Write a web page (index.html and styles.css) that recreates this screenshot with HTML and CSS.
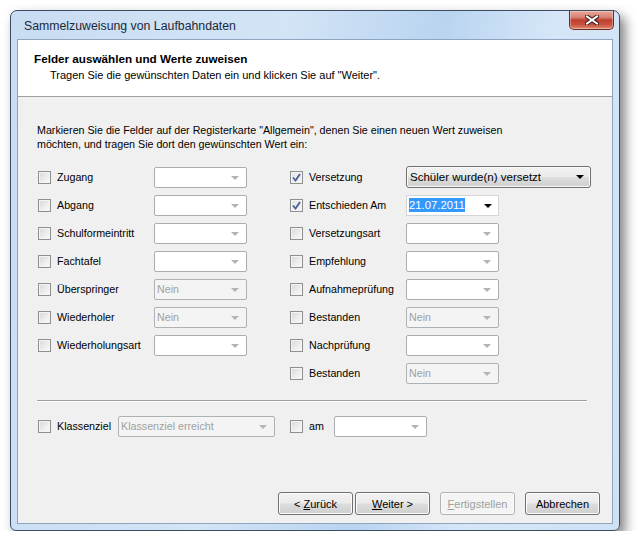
FILE: index.html
```html
<!DOCTYPE html>
<html lang="de">
<head>
    <meta charset="UTF-8">
    <title>Sammelzuweisung von Laufbahndaten</title>
    <link rel="stylesheet" href="styles.css">
</head>
<body>
    <div class="window">
        <div class="titlebar">
            <span class="title">Sammelzuweisung von Laufbahndaten</span>
            <span class="close-btn">
                <svg width="14" height="10" viewBox="0 0 14 10">
                    <path d="M2 1.5 L12 8.5 M12 1.5 L2 8.5" stroke="#3a1a16" stroke-width="4" stroke-linecap="square"/>
                    <path d="M2 1.5 L12 8.5 M12 1.5 L2 8.5" stroke="#fff" stroke-width="2" stroke-linecap="square"/>
                </svg>
            </span>
        </div>

        <div class="client">
            <div class="header">
                <div class="header-title">Felder auswählen und Werte zuweisen</div>
                <div class="header-sub">Tragen Sie die gewünschten Daten ein und klicken Sie auf "Weiter".</div>
            </div>

            <div class="content">
                <p class="intro">Markieren Sie die Felder auf der Registerkarte "Allgemein", denen Sie einen neuen Wert zuweisen<br>möchten, und tragen Sie dort den gewünschten Wert ein:</p>

                <div class="fields">
                    <div class="field-col">
                        <div class="row">
                            <label class="check"><span class="box"></span>Zugang</label>
                            <span class="combo"><span class="arrow"></span></span>
                        </div>
                        <div class="row">
                            <label class="check"><span class="box"></span>Abgang</label>
                            <span class="combo"><span class="arrow"></span></span>
                        </div>
                        <div class="row">
                            <label class="check"><span class="box"></span>Schulformeintritt</label>
                            <span class="combo"><span class="arrow"></span></span>
                        </div>
                        <div class="row">
                            <label class="check"><span class="box"></span>Fachtafel</label>
                            <span class="combo"><span class="arrow"></span></span>
                        </div>
                        <div class="row">
                            <label class="check"><span class="box"></span>Überspringer</label>
                            <span class="combo disabled"><span class="value">Nein</span><span class="arrow"></span></span>
                        </div>
                        <div class="row">
                            <label class="check"><span class="box"></span>Wiederholer</label>
                            <span class="combo disabled"><span class="value">Nein</span><span class="arrow"></span></span>
                        </div>
                        <div class="row">
                            <label class="check"><span class="box"></span>Wiederholungsart</label>
                            <span class="combo"><span class="arrow"></span></span>
                        </div>
                    </div>

                    <div class="field-col right">
                        <div class="row">
                            <label class="check"><span class="box checked"><svg width="9" height="9" viewBox="0 0 9 9"><path d="M1 4.5 L3.5 7.5 L8 1" fill="none" stroke="#4b5f9a" stroke-width="1.8"/></svg></span>Versetzung</label>
                            <span class="combo active"><span class="value">Schüler wurde(n) versetzt</span><span class="arrow dark"></span></span>
                        </div>
                        <div class="row">
                            <label class="check"><span class="box checked"><svg width="9" height="9" viewBox="0 0 9 9"><path d="M1 4.5 L3.5 7.5 L8 1" fill="none" stroke="#4b5f9a" stroke-width="1.8"/></svg></span>Entschieden Am</label>
                            <span class="combo date"><span class="value"><span class="selected">21.07.2011</span></span><span class="arrow dark"></span></span>
                        </div>
                        <div class="row">
                            <label class="check"><span class="box"></span>Versetzungsart</label>
                            <span class="combo"><span class="arrow"></span></span>
                        </div>
                        <div class="row">
                            <label class="check"><span class="box"></span>Empfehlung</label>
                            <span class="combo"><span class="arrow"></span></span>
                        </div>
                        <div class="row">
                            <label class="check"><span class="box"></span>Aufnahmeprüfung</label>
                            <span class="combo"><span class="arrow"></span></span>
                        </div>
                        <div class="row">
                            <label class="check"><span class="box"></span>Bestanden</label>
                            <span class="combo disabled"><span class="value">Nein</span><span class="arrow"></span></span>
                        </div>
                        <div class="row">
                            <label class="check"><span class="box"></span>Nachprüfung</label>
                            <span class="combo"><span class="arrow"></span></span>
                        </div>
                        <div class="row">
                            <label class="check"><span class="box"></span>Bestanden</label>
                            <span class="combo disabled"><span class="value">Nein</span><span class="arrow"></span></span>
                        </div>
                    </div>
                </div>

                <div class="divider"></div>

                <div class="row bottom-row">
                    <label class="check short"><span class="box"></span>Klassenziel</label>
                    <span class="combo disabled klassenziel"><span class="value">Klassenziel erreicht</span><span class="arrow"></span></span>
                    <label class="check am"><span class="box"></span>am</label>
                    <span class="combo"><span class="arrow"></span></span>
                </div>
            </div>

            <div class="footer">
                <button class="btn">&lt; <u>Z</u>urück</button>
                <button class="btn"><u>W</u>eiter &gt;</button>
                <button class="btn disabled"><u>F</u>ertigstellen</button>
                <button class="btn">Abbrechen</button>
            </div>
        </div>
    </div>
</body>
</html>
```

FILE: styles.css
```css
body {
    margin: 0;
    padding: 0;
    background-color: #ffffff;
    font-family: 'Liberation Sans', Arial, sans-serif;
    font-size: 10.7px;
    color: #000;
}

/* Window frame */
.window {
    position: relative;
    box-sizing: border-box;
    width: 610px;
    height: 521px;
    margin: 10px 0 0 10px;
    padding: 0 6px 6px 6px;
    display: flex;
    flex-direction: column;
    border: 1px solid #3a4d63;
    border-radius: 7px 7px 6px 6px;
    background: linear-gradient(100deg, #c8dcf2 0%, #d3e4f6 40%, #b9d4f0 62%, #d6e6f8 78%, #cfe1f5 100%);
    box-shadow: 5px 6px 12px rgba(0, 0, 0, 0.5);
}
.titlebar {
    height: 28px;
    display: flex;
    align-items: center;
    padding-left: 7px;
}
.title {
    font-size: 12.3px;
    color: #1a2a3a;
    padding-top: 1px;
}
.close-btn {
    position: absolute;
    top: 0;
    right: 5px;
    width: 43px;
    height: 18px;
    display: flex;
    align-items: center;
    justify-content: center;
    border: 1px solid #6a2a22;
    border-top: none;
    border-radius: 0 0 5px 5px;
    background: linear-gradient(#e9a699 0%, #d88272 35%, #bf3f2e 50%, #c9503d 75%, #e08a74 100%);
    box-shadow: inset 0 0 0 1px rgba(255, 255, 255, 0.35);
}

/* Client area */
.client {
    flex: 1;
    display: flex;
    flex-direction: column;
    border: 1px solid #8fa4bf;
    background-color: #f0f0f0;
}
.header {
    height: 57px;
    box-sizing: border-box;
    padding: 12px 0 0 16px;
    background-color: #fff;
    border-bottom: 1px solid #a0a0a0;
    line-height: 14px;
    font-size: 11px;
}
.header-title {
    font-weight: bold;
    font-size: 11.7px;
}
.header-sub {
    margin-top: 2px;
    padding-left: 16px;
}

.content {
    padding: 26px 0 0 19px;
}
.intro {
    margin: 0 0 12px 0;
    line-height: 14px;
}

.fields {
    display: flex;
}
.field-col {
    display: flex;
    flex-direction: column;
    width: 252px;
    flex-shrink: 0;
}
.field-col.right {
    width: 310px;
}
.row {
    display: flex;
    align-items: center;
    height: 28px;
}
.check {
    display: flex;
    align-items: center;
    width: 117px;
    flex-shrink: 0;
    padding-left: 1px;
    box-sizing: border-box;
}
.box {
    box-sizing: border-box;
    width: 13px;
    height: 13px;
    flex-shrink: 0;
    margin-right: 6px;
    border: 1px solid #8e8f8f;
    background: linear-gradient(135deg, #d8d8d8 0%, #eeeeee 60%, #fbfbfb 100%);
    box-shadow: inset 0 0 0 1px #f4f4f4;
    display: flex;
    align-items: center;
    justify-content: center;
}
.box.checked {
    background: linear-gradient(135deg, #e4e4e4 0%, #f6f6f6 100%);
}

/* Combo boxes */
.combo {
    position: relative;
    box-sizing: border-box;
    width: 93px;
    height: 21px;
    flex-shrink: 0;
    display: flex;
    align-items: center;
    border: 1px solid #abadb3;
    border-radius: 2px;
    background-color: #fff;
}
.combo .value {
    padding-left: 2px;
    white-space: nowrap;
}
.arrow {
    position: absolute;
    right: 7px;
    top: 8px;
    width: 0;
    height: 0;
    border-left: 4px solid transparent;
    border-right: 4px solid transparent;
    border-top: 4px solid #b4b4b4;
}
.arrow.dark {
    border-top-color: #000;
    right: 6px;
}
.combo.disabled {
    background-color: #f4f4f4;
    border-color: #adb2b5;
    color: #a0a0a0;
}
.combo.active {
    width: 185px;
    height: 22px;
    border: 1px solid #707070;
    border-radius: 3px;
    background: linear-gradient(#f2f2f2 0%, #ebebeb 48%, #dddddd 52%, #cfcfcf 100%);
    box-shadow: inset 0 0 0 1px #fafafa;
}
.combo.active .value {
    padding-left: 3px;
    font-size: 11.5px;
}
.combo.date {
    border-color: #d5d5d5;
    border-radius: 0;
}
.selected {
    background-color: #3399ff;
    color: #fff;
    padding: 1px 0;
    font-size: 11.3px;
}

.divider {
    height: 1px;
    width: 550px;
    margin-top: 13px;
    background-color: #a0a0a0;
    border-bottom: 1px solid #fff;
}
.bottom-row {
    margin-top: 10px;
}
.check.short {
    width: 81px;
}
.combo.klassenziel {
    width: 157px;
}
.check.am {
    width: 45px;
    margin-left: 14px;
}

/* Footer buttons */
.footer {
    margin-top: auto;
    display: flex;
    justify-content: flex-end;
    padding: 0 12px 8px 0;
}
.btn {
    box-sizing: border-box;
    width: 75px;
    height: 23px;
    margin-left: 10px;
    padding: 0;
    font-family: inherit;
    font-size: 11px;
    color: #000;
    border: 1px solid #707070;
    border-radius: 3px;
    background: linear-gradient(#f2f2f2 0%, #ebebeb 48%, #dddddd 52%, #cfcfcf 100%);
    box-shadow: inset 0 0 0 1px #fbfbfb;
}
.btn:nth-child(2) {
    margin-left: 2px;
}
.btn.disabled {
    color: #a0a0a0;
    border-color: #adb2b5;
    background: #f4f4f4;
}
```
